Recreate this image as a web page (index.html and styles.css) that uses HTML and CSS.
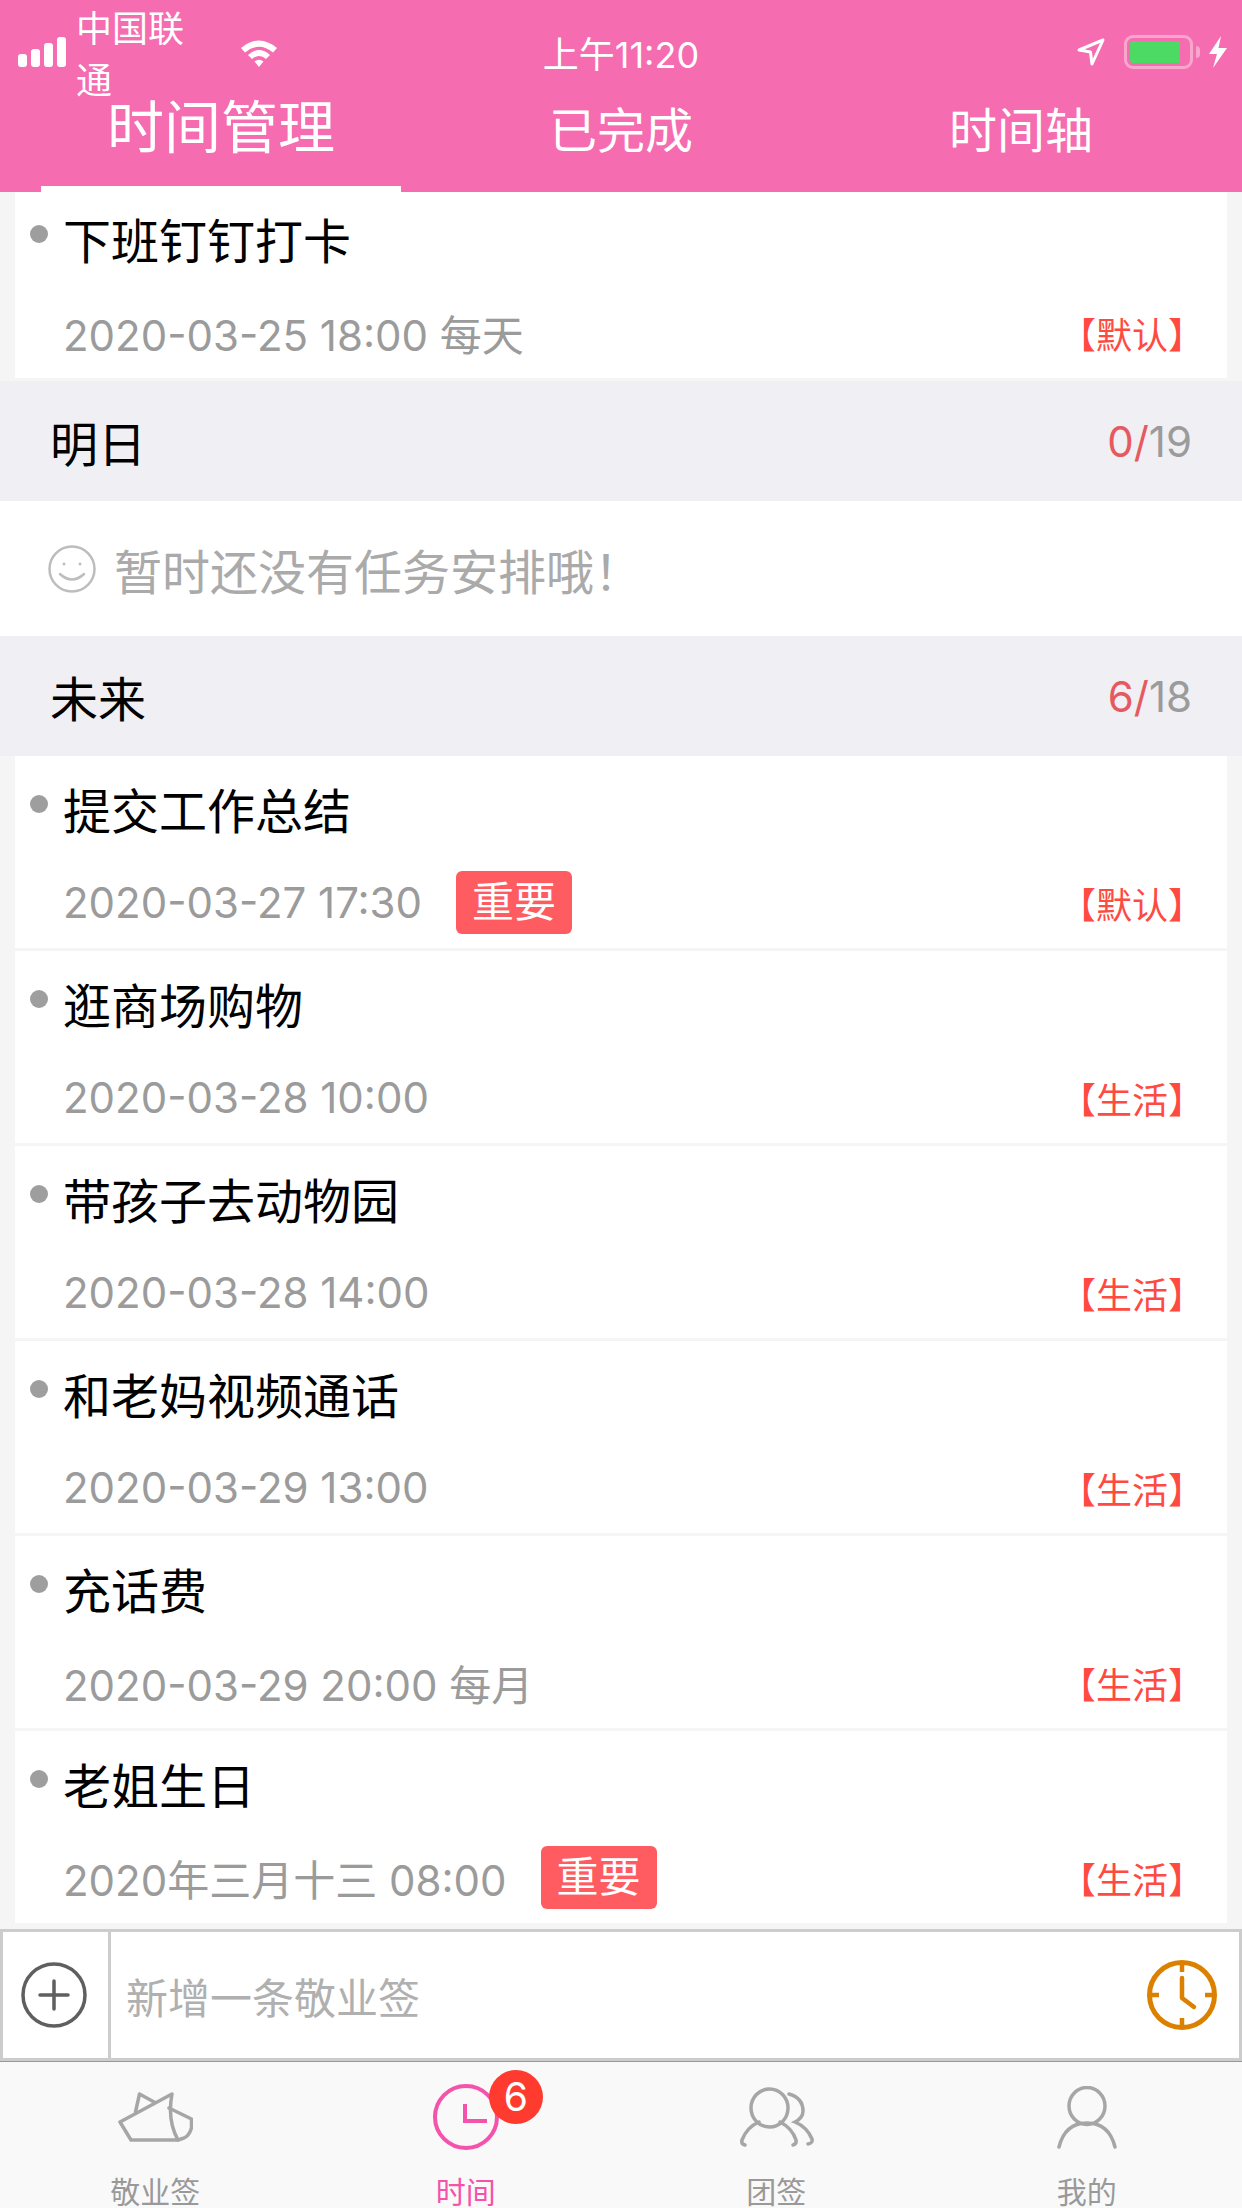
FILE: index.html
```html
<!DOCTYPE html>
<html lang="zh-CN">
<head>
    <meta charset="UTF-8">
    <title>敬业签 - 时间管理</title>
    <link rel="stylesheet" href="styles.css">
</head>
<body>
    <header class="top">
        <div class="status-bar">
            <div class="status-left">
                <div class="signal"><i class="b1"></i><i class="b2"></i><i class="b3"></i><i class="b4"></i></div>
                <span class="carrier">中国联通</span>
                <svg class="wifi" viewBox="0 0 42 30">
                    <path d="M3 11 Q21 -4 39 11 L35 15.5 Q21 4 7 15.5 Z" fill="#fff"/>
                    <path d="M10 18 Q21 8 32 18 L28 22 Q21 16 14 22 Z" fill="#fff"/>
                    <path d="M16.5 24.5 Q21 21 25.5 24.5 L21 30 Z" fill="#fff"/>
                </svg>
            </div>
            <div class="status-time">上午11:20</div>
            <div class="status-right">
                <svg class="arrow" viewBox="0 0 28 28">
                    <path d="M2 12 L26 2 L15 26 L13.5 14 Z" fill="none" stroke="#fff" stroke-width="3" stroke-linejoin="round"/>
                </svg>
                <div class="battery"><div class="battery-fill"></div></div>
                <div class="battery-nub"></div>
                <svg class="bolt" viewBox="0 0 18 32">
                    <polygon points="12,0 0,18 8,18 4,32 18,12 9.5,12" fill="#fff"/>
                </svg>
            </div>
        </div>
        <nav class="tabs">
            <div class="tab tab-active">时间管理</div>
            <div class="tab">已完成</div>
            <div class="tab">时间轴</div>
        </nav>
    </header>

    <main class="list">
        <div class="row">
            <div class="row-title"><span class="dot"></span>下班钉钉打卡</div>
            <div class="row-meta">
                <span class="date">2020-03-25 18:00 每天</span>
                <span class="cat">【默认】</span>
            </div>
        </div>

        <div class="section">
            <span class="section-name">明日</span>
            <span class="count"><em>0/</em>19</span>
        </div>
        <div class="empty">
            <svg class="smile" viewBox="0 0 48 48" fill="none" stroke="#bdbdbd" stroke-width="2.5">
                <circle cx="24" cy="24" r="22.5"/>
                <circle cx="16" cy="19" r="1.5" fill="#bdbdbd" stroke="none"/>
                <circle cx="32" cy="19" r="1.5" fill="#bdbdbd" stroke="none"/>
                <path d="M12 29 Q24 40 36 29" stroke-linecap="round"/>
            </svg>
            <span>暂时还没有任务安排哦！</span>
        </div>

        <div class="section section-flush">
            <span class="section-name">未来</span>
            <span class="count"><em>6/</em>18</span>
        </div>
        <div class="row">
            <div class="row-title"><span class="dot"></span>提交工作总结</div>
            <div class="row-meta">
                <span class="date">2020-03-27 17:30</span>
                <span class="tag">重要</span>
                <span class="cat">【默认】</span>
            </div>
        </div>
        <div class="row">
            <div class="row-title"><span class="dot"></span>逛商场购物</div>
            <div class="row-meta">
                <span class="date">2020-03-28 10:00</span>
                <span class="cat">【生活】</span>
            </div>
        </div>
        <div class="row">
            <div class="row-title"><span class="dot"></span>带孩子去动物园</div>
            <div class="row-meta">
                <span class="date">2020-03-28 14:00</span>
                <span class="cat">【生活】</span>
            </div>
        </div>
        <div class="row">
            <div class="row-title"><span class="dot"></span>和老妈视频通话</div>
            <div class="row-meta">
                <span class="date">2020-03-29 13:00</span>
                <span class="cat">【生活】</span>
            </div>
        </div>
        <div class="row">
            <div class="row-title"><span class="dot"></span>充话费</div>
            <div class="row-meta">
                <span class="date">2020-03-29 20:00 每月</span>
                <span class="cat">【生活】</span>
            </div>
        </div>
        <div class="row">
            <div class="row-title"><span class="dot"></span>老姐生日</div>
            <div class="row-meta">
                <span class="date">2020年三月十三 08:00</span>
                <span class="tag">重要</span>
                <span class="cat">【生活】</span>
            </div>
        </div>
    </main>

    <div class="add-bar">
        <div class="add-btn">
            <svg class="plus" viewBox="0 0 66 66" fill="none" stroke="#5f5f5f">
                <circle cx="33" cy="33" r="31" stroke-width="3.5"/>
                <path d="M19 33 H47 M33 19 V47" stroke-width="3.5" stroke-linecap="round"/>
            </svg>
        </div>
        <div class="add-input">新增一条敬业签</div>
        <svg class="remind" viewBox="0 0 70 70" fill="none" stroke="#dc8000">
            <circle cx="35" cy="35" r="32.5" stroke-width="5"/>
            <path d="M35 3 V12 M35 58 V67 M3 35 H12 M58 35 H67" stroke-width="4.5"/>
            <path d="M35 18 V38 L47 47" stroke-width="4.5" stroke-linecap="round" stroke-linejoin="round"/>
        </svg>
    </div>

    <footer class="tabbar">
        <div class="tabbar-item">
            <svg class="ico ico-boat" viewBox="0 0 75 51" fill="none" stroke="#a6a6a6" stroke-width="3.5" stroke-linejoin="round" stroke-linecap="round">
                <path d="M2 30 L54 2 Q49 28 60 48 L13 48 Z"/>
                <path d="M17.5 20 L21.5 2 L37 10.5"/>
                <path d="M51 16 L73.5 27 L73.5 36 Q71 44 66 46 L60 48"/>
            </svg>
            <span>敬业签</span>
        </div>
        <div class="tabbar-item tabbar-active">
            <div class="ico-wrap">
                <svg class="ico ico-clock" viewBox="0 0 66 66" fill="none" stroke="#f552ab" stroke-width="4">
                    <circle cx="33" cy="33" r="31"/>
                    <path d="M32 20 V37 H54" />
                </svg>
                <span class="badge">6</span>
            </div>
            <span>时间</span>
        </div>
        <div class="tabbar-item">
            <svg class="ico ico-team" viewBox="0 0 75 61" fill="none" stroke="#a6a6a6" stroke-width="3.5" stroke-linecap="round">
                <ellipse cx="30.5" cy="21" rx="18.5" ry="19"/>
                <path d="M6 58 Q2 57 3 53 Q8 40 20 35"/>
                <path d="M41 35 Q53 41 57 53 Q58 57 54 58"/>
                <path d="M50 7 Q64 11 64 24 Q64 31 56 35 Q68 40 73 52 Q74 56 69 57"/>
            </svg>
            <span>团签</span>
        </div>
        <div class="tabbar-item">
            <svg class="ico ico-me" viewBox="0 0 60 63" fill="none" stroke="#a6a6a6" stroke-width="3.5" stroke-linecap="round">
                <ellipse cx="30" cy="20" rx="18" ry="18.5"/>
                <path d="M2 61 C6 45 15 37 30 37 C45 37 54 45 58 61"/>
            </svg>
            <span>我的</span>
        </div>
    </footer>
</body>
</html>
```

FILE: styles.css
```css
* {
    box-sizing: border-box;
}

body {
    margin: 0;
    width: 1242px;
    height: 2208px;
    display: flex;
    flex-direction: column;
    overflow: hidden;
    font-family: Inter, "Noto Sans CJK SC", sans-serif;
    background-color: #f5f5f5;
    color: #000;
}

/* --- header --- */
.top {
    background-color: #f56cb0;
    color: #fff;
    flex: none;
}

.status-bar {
    height: 60px;
    display: grid;
    grid-template-columns: 1fr auto 1fr;
    align-items: center;
    font-size: 36px;
}

.status-left {
    display: flex;
    align-items: center;
    padding-left: 18px;
}

.signal {
    display: flex;
    align-items: flex-end;
    gap: 4px;
    height: 30px;
    margin-right: 10px;
}

.signal i {
    width: 9px;
    background-color: #fff;
    border-radius: 3px;
}

.signal .b1 { height: 13px; }
.signal .b2 { height: 18px; }
.signal .b3 { height: 24px; }
.signal .b4 { height: 30px; }

.carrier {
    width: 141px;
}

.wifi {
    width: 42px;
    height: 30px;
    margin-left: 21px;
}

.status-time {
    font-size: 36px;
}

.status-right {
    display: flex;
    align-items: center;
    justify-content: flex-end;
    padding-right: 15px;
}

.arrow {
    width: 28px;
    height: 28px;
    margin-right: 19px;
}

.battery {
    width: 69px;
    height: 34px;
    border: 3px solid rgba(255, 255, 255, 0.4);
    border-radius: 9px;
    padding: 3px;
}

.battery-fill {
    width: 50px;
    height: 22px;
    background-color: #4cd964;
    border-radius: 3px 0 0 3px;
}

.battery-nub {
    width: 4px;
    height: 12px;
    margin-left: 3px;
    background-color: rgba(255, 255, 255, 0.4);
    border-radius: 0 4px 4px 0;
}

.bolt {
    width: 18px;
    height: 32px;
    margin-left: 9px;
}

.tabs {
    height: 132px;
    padding: 0 21px;
    display: grid;
    grid-template-columns: repeat(3, 400px);
}

.tab {
    display: flex;
    align-items: center;
    justify-content: center;
    margin: 0 20px;
    font-size: 48px;
    color: #fff;
    padding-top: 2px;
}

.tab-active {
    font-size: 57px;
    padding-top: 0;
    border-bottom: 6px solid #fff;
}

/* --- list --- */
.list {
    flex: 1;
    min-height: 0;
    overflow: hidden;
}

.row {
    height: 192px;
    margin: 0 15px 3px;
    padding: 26px 23px 0 15px;
    background-color: #fff;
}

/* first row is scrolled a bit under the header */
.row:first-child {
    margin-top: -6px;
}

.row-title {
    display: flex;
    align-items: flex-start;
    height: 60px;
    font-size: 48px;
    line-height: 60px;
}

.dot {
    flex: none;
    width: 18px;
    height: 18px;
    margin: 13px 15px 0 0;
    background-color: #9e9e9e;
    border-radius: 50%;
}

.row-meta {
    display: flex;
    align-items: center;
    height: 63px;
    margin-top: 29px;
    padding-left: 33px;
}

.date {
    font-size: 42px;
    color: #9b9b9b;
}

.tag {
    width: 116px;
    height: 63px;
    margin-left: 34px;
    background-color: #ff5c62;
    border-radius: 6px;
    color: #fff;
    font-size: 42px;
    line-height: 61px;
    text-align: center;
}

.cat {
    margin-left: auto;
    font-size: 36px;
    color: #ff4a42;
}

.section {
    height: 120px;
    margin-bottom: 0;
    padding: 0 50px;
    display: flex;
    align-items: center;
    justify-content: space-between;
    background-color: #efeff4;
}

.section-name {
    font-size: 48px;
}

.count {
    font-size: 42px;
    color: #9b9b9b;
}

.count em {
    font-style: normal;
    color: #e65a5f;
}

.empty {
    height: 135px;
    padding-left: 48px;
    display: flex;
    align-items: center;
    gap: 18px;
    background-color: #fff;
    font-size: 48px;
    color: #aaa;
}

.smile {
    width: 48px;
    height: 48px;
}

/* --- add bar --- */
.add-bar {
    flex: none;
    height: 132px;
    display: flex;
    align-items: center;
    background-color: #fff;
    border: 3px solid #ccc;
}

.add-btn {
    width: 108px;
    height: 100%;
    display: flex;
    align-items: center;
    padding-left: 18px;
    border-right: 3px solid #ccc;
}

.plus {
    width: 66px;
    height: 66px;
}

.add-input {
    flex: 1;
    padding-left: 15px;
    font-size: 42px;
    color: #b0b0b0;
}

.remind {
    width: 70px;
    height: 70px;
    margin-right: 22px;
}

/* --- bottom tabs --- */
.tabbar {
    flex: none;
    height: 147px;
    display: grid;
    grid-template-columns: repeat(4, 1fr);
    background-color: #f9f9f9;
    border-top: 1px solid #999;
}

.tabbar-item {
    position: relative;
    display: flex;
    flex-direction: column;
    align-items: center;
    font-size: 30px;
    color: #999;
}

.tabbar-item > span {
    position: absolute;
    top: 106px;
}

.tabbar-active {
    color: #f552ab;
}

.ico-boat {
    width: 75px;
    height: 51px;
    margin-top: 30px;
}

.ico-wrap {
    position: relative;
    width: 66px;
    height: 66px;
    margin-top: 22px;
}

.ico-clock {
    display: block;
    width: 66px;
    height: 66px;
}

.badge {
    position: absolute;
    top: -14px;
    left: 56px;
    width: 54px;
    height: 54px;
    background-color: #ff3b30;
    border-radius: 50%;
    color: #fff;
    font-size: 39px;
    line-height: 54px;
    text-align: center;
}

.ico-team {
    width: 75px;
    height: 61px;
    margin-top: 25px;
}

.ico-me {
    width: 60px;
    height: 63px;
    margin-top: 24px;
}
```
